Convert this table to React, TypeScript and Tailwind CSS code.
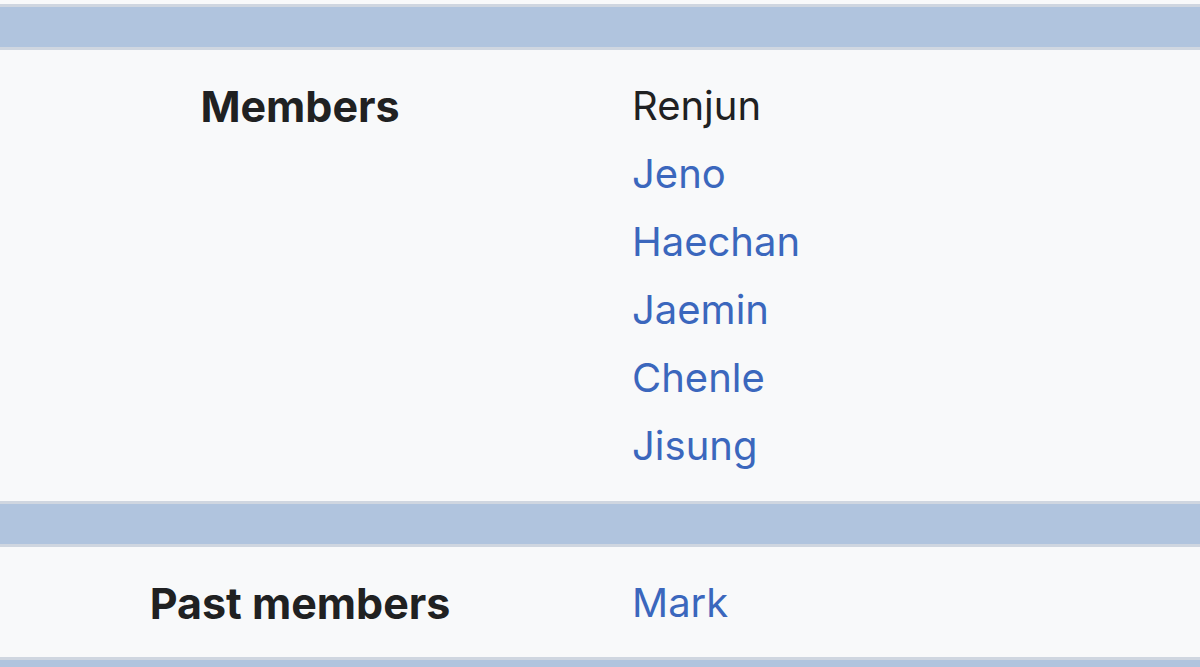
const members = ["Jeno", "Haechan", "Jaemin", "Chenle", "Jisung"];

const Band = () => (
    <div className="h-[40px] bg-[#b0c4de] border-y-[3px] border-[#cfd6e0] box-content" />
);

const Row = ({ label, last, children }: { label: string; last?: boolean; children: React.ReactNode }) => (
    <div className={`flex bg-[#f8f9fa] pt-[22px] ${last ? "pb-[20px]" : "pb-[21px]"}`}>
        <div className="w-[600px] text-center font-bold text-[43px] text-[#202122]">{label}</div>
        <div className="flex-1 pl-[32px] flex flex-col">{children}</div>
    </div>
);

export default function App() {
    return (
        <div
            className="w-[1200px] h-[667px] overflow-hidden bg-[#f8f9fa] pt-[4px] text-[40px] leading-[68px]"
            style={{ fontFamily: "Inter, 'Noto Sans', sans-serif" }}
        >
            <Band />
            <Row label="Members">
                <span className="text-[#202122]">Renjun</span>
                {members.map((m) => (
                    <a key={m} className="text-[#3b67bd]">
                        {m}
                    </a>
                ))}
            </Row>
            <Band />
            <Row label="Past members" last>
                <a className="text-[#3b67bd]">Mark</a>
            </Row>
            <Band />
        </div>
    );
}
